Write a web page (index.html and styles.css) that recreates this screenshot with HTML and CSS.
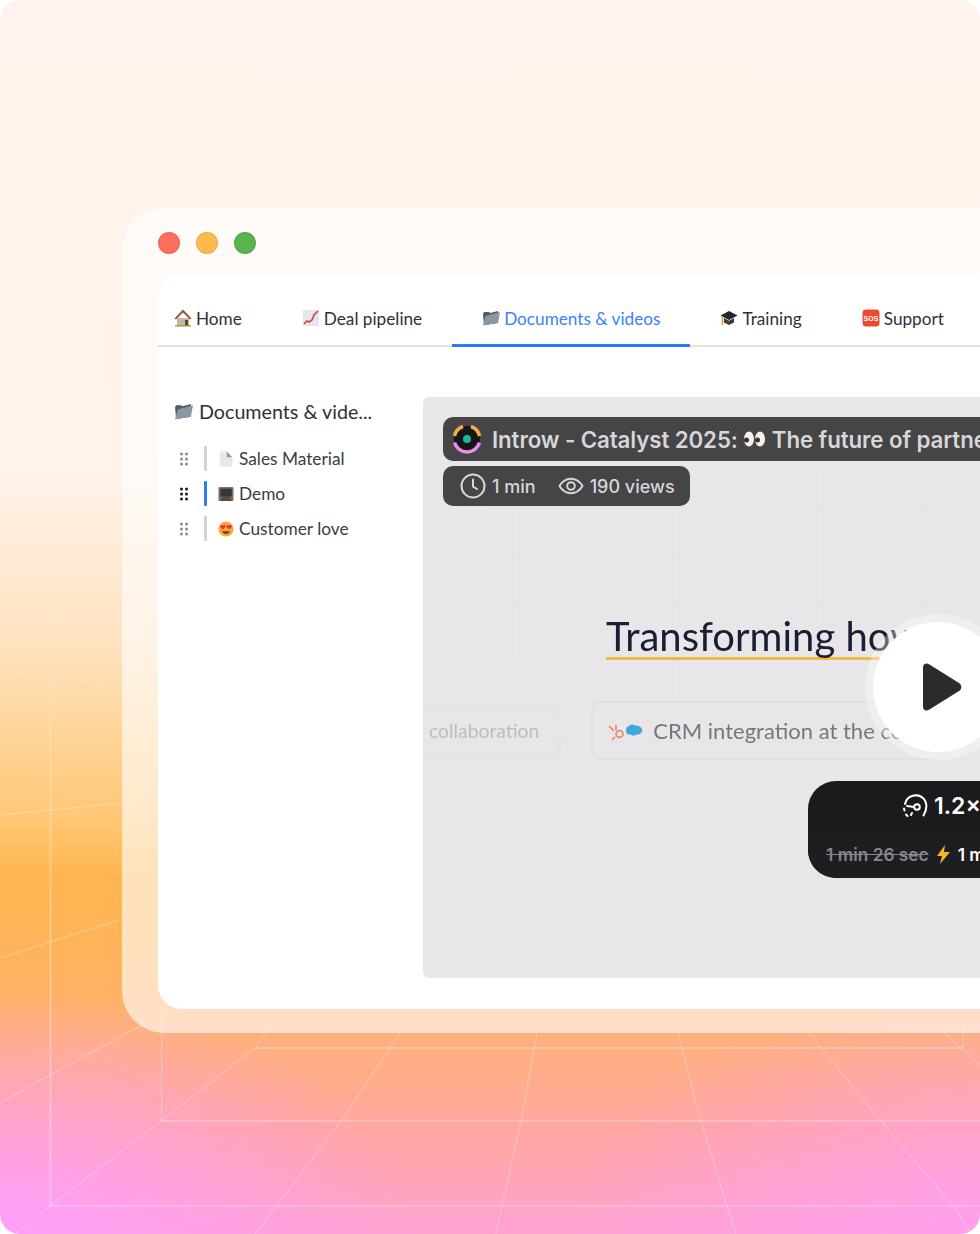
FILE: index.html
```html
<!DOCTYPE html>
<html lang="en">
<head>
    <meta charset="UTF-8">
    <meta name="viewport" content="width=device-width, initial-scale=1.0">
    <title>Partner portal</title>
    <link rel="stylesheet" href="styles.css">
</head>
<body>
    <div class="page">
        <!-- floor grid behind the window -->
        <svg class="floor-grid" width="980" height="1234" viewBox="0 0 980 1234" fill="none">
            <defs>
                <linearGradient id="fade" gradientUnits="userSpaceOnUse" x1="0" y1="510" x2="0" y2="900">
                    <stop offset="0" stop-color="#fff" stop-opacity="0"/>
                    <stop offset="1" stop-color="#fff" stop-opacity=".3"/>
                </linearGradient>
            </defs>
            <path d="M50.500 510V1206" stroke="url(#fade)" stroke-width="2"/>
            <g stroke="#fff" stroke-opacity=".3">
                <path d="M161.500 1010V1121M963.500 1020V1048"/>
                <path d="M50 1206H980M161 1121H980M255 1048H963" stroke-width="1.500"/>
                <path d="M15 1234L50 1206 161 1121 255 1048 272 1025"/>
                <path d="M255 1234L277 1206 341 1121 400 1033"/>
                <path d="M496 1234L502 1206 521 1121 537 1033"/>
                <path d="M736 1234L727 1206 701 1121 678 1033"/>
                <path d="M972 1234L953 1206 881 1121 809 1033"/>
                <path d="M945 1033L980 1066"/>
                <path d="M0 1103L50 1075 142 1025"/>
                <path d="M0 958L50 942 122 919"/>
                <path d="M0 815L122 803"/>
                <path d="M10 672L122 685" stroke-opacity=".2"/>
            </g>
        </svg>

        <div class="window">
            <div class="window-bar">
                <span class="dot dot-red"></span>
                <span class="dot dot-yellow"></span>
                <span class="dot dot-green"></span>
            </div>
            <div class="card">
                <nav class="tabs">
                    <a class="tab tab-first">
                        <svg class="emoji" viewBox="0 0 18 18"><path d="M3 9h12v8H3z" fill="#d9b48c"/><path d="M9 0.500L0.500 9.500l1.500 1L9 3.500l7 7 1.500-1z" fill="#8b5a3c"/><rect x="4.500" y="10" width="4.500" height="3.500" fill="#8fc3dc"/><rect x="11" y="11" width="3" height="6" fill="#6b4428"/><path d="M1 16.200h16v1.300H1z" fill="#7d9a4f"/></svg>
                        Home
                    </a>
                    <a class="tab">
                        <svg class="emoji" viewBox="0 0 18 18"><rect x="1" y="1" width="16" height="16" fill="#e6e7ec"/><path d="M2 15l3-3 2 1 3-2 2-5 4-4" stroke="#d8453c" stroke-width="1.700" fill="none"/></svg>
                        Deal pipeline
                    </a>
                    <a class="tab tab-active">
                        <svg class="emoji" viewBox="0 0 18 18"><path d="M1 5l1-2h5l1 1 8-2v12L2 16z" fill="#4f5c68"/><path d="M3.500 7L18 3l-2 11L1 16.500z" fill="#8b97a3"/></svg>
                        Documents &amp; videos
                    </a>
                    <a class="tab">
                        <svg class="emoji" viewBox="0 0 18 18"><path d="M9 2L0.500 6.500 9 11l8.500-4.500z" fill="#26262a"/><path d="M4 9v4.500l5 2.500 5-2.500V9l-5 2.700z" fill="#3d3b3c"/><path d="M2.500 8v8" stroke="#e2a32e" stroke-width="1.700"/></svg>
                        Training
                    </a>
                    <a class="tab">
                        <svg class="emoji" viewBox="0 0 18 18"><rect x="0.500" y="0.500" width="17" height="17" rx="3.500" fill="#ee4a32"/><text x="9" y="11.500" class="sos">SOS</text></svg>
                        Support
                    </a>
                </nav>
                <div class="content">
                    <aside class="sidebar">
                        <div class="side-title">
                            <svg class="emoji emoji-big" viewBox="0 0 18 18"><path d="M1 5l1-2h5l1 1 8-2v12L2 16z" fill="#4f5c68"/><path d="M3.500 7L18 3l-2 11L1 16.500z" fill="#8b97a3"/></svg>
                            Documents &amp; vide...
                        </div>
                        <div class="side-item">
                            <svg class="grip" viewBox="0 0 8 14"><g fill="#8a8a90"><circle cx="1.500" cy="2" r="1.500"/><circle cx="6.500" cy="2" r="1.500"/><circle cx="1.500" cy="7" r="1.500"/><circle cx="6.500" cy="7" r="1.500"/><circle cx="1.500" cy="12" r="1.500"/><circle cx="6.500" cy="12" r="1.500"/></g></svg>
                            <span class="side-bar"></span>
                            <svg class="emoji emoji-side" viewBox="0 0 16 18"><path d="M1 0.500h8l6 6.500v10.500H1z" fill="#e9e9ec"/><path d="M9 0.500l6 6.500H9z" fill="#96969c"/></svg>
                            Sales Material
                        </div>
                        <div class="side-item">
                            <svg class="grip" viewBox="0 0 8 14"><g fill="#19191c"><circle cx="1.500" cy="2" r="1.500"/><circle cx="6.500" cy="2" r="1.500"/><circle cx="1.500" cy="7" r="1.500"/><circle cx="6.500" cy="7" r="1.500"/><circle cx="1.500" cy="12" r="1.500"/><circle cx="6.500" cy="12" r="1.500"/></g></svg>
                            <span class="side-bar side-bar-active"></span>
                            <svg class="emoji emoji-side" viewBox="0 0 18 18"><rect x="0.500" y="1" width="17" height="16" rx="1.500" fill="#8a6f5f"/><rect x="2.500" y="3" width="13" height="9" fill="#33363d"/><path d="M2 17l3-5h8l3 5z" fill="#5d4a40"/></svg>
                            Demo
                        </div>
                        <div class="side-item">
                            <svg class="grip" viewBox="0 0 8 14"><g fill="#8a8a90"><circle cx="1.500" cy="2" r="1.500"/><circle cx="6.500" cy="2" r="1.500"/><circle cx="1.500" cy="7" r="1.500"/><circle cx="6.500" cy="7" r="1.500"/><circle cx="1.500" cy="12" r="1.500"/><circle cx="6.500" cy="12" r="1.500"/></g></svg>
                            <span class="side-bar"></span>
                            <svg class="emoji emoji-side" viewBox="0 0 18 18"><circle cx="9" cy="9" r="8.500" fill="#f6a93b"/><path d="M4.500 11.500c2 4 7 4 9 0z" fill="#7a3b1e"/><path d="M5.500 9.500L2.500 6.500c0-2.500 2.500-2.500 3-1 .5-1.500 3-1.500 3 1zM12.500 9.500L9.500 6.500c0-2.500 2.500-2.500 3-1 .5-1.500 3-1.500 3 1z" fill="#e5303c"/></svg>
                            Customer love
                        </div>
                    </aside>

                    <section class="video">
                        <svg class="video-grid" width="560" height="581" viewBox="0 0 560 581" fill="none" stroke="#e5e3e6">
                            <path d="M60 110H560M0 210H560M0 345H560M0 415H560M90 90V260M250 90V300M400 70V260M500 80V520M205 430V520M300 430V520M0 160H300"/>
                        </svg>
                        <div class="chip chip-title">
                            <svg class="logo" width="30" height="30" viewBox="0 0 30 30" fill="none">
                                <circle cx="15" cy="15" r="13" fill="#161618"/>
                                <path d="M2.500 12A13 13 0 0 1 11 2.500" stroke="#f5ae3c" stroke-width="3.500"/>
                                <path d="M19 2.500A13 13 0 0 1 27.500 12" stroke="#f5ae3c" stroke-width="3.500"/>
                                <path d="M2.500 18.500A13 13 0 0 0 27.500 18.500" stroke="#f08ae8" stroke-width="3.500"/>
                                <circle cx="15" cy="15" r="4" fill="#1fb58f"/>
                            </svg>
                            <span>Introw - Catalyst 2025:</span>
                            <svg class="eyes" width="23" height="18" viewBox="0 0 23 18"><ellipse cx="6" cy="9" rx="5" ry="7.500" fill="#f4f2ee"/><ellipse cx="17" cy="9" rx="5" ry="7.500" fill="#f4f2ee"/><circle cx="3.500" cy="10" r="2.500" fill="#4a2a16"/><circle cx="14.500" cy="10" r="2.500" fill="#4a2a16"/></svg>
                            <span>The future of partnerships</span>
                        </div>
                        <div class="chip chip-meta">
                            <svg width="26" height="26" viewBox="0 0 26 26" fill="none" stroke="#d8d6d8" stroke-width="2" stroke-linecap="round"><circle cx="13" cy="13" r="11.500"/><path d="M13 6.500V13.500l4 2.500"/></svg>
                            <span>1 min</span>
                            <svg class="meta-eye" width="26" height="26" viewBox="0 0 26 26" fill="none" stroke="#d8d6d8" stroke-width="2"><path d="M1.500 13C4.500 8 8.500 5.800 13 5.800S21.500 8 24.500 13C21.500 18 17.500 20.200 13 20.200S4.500 18 1.500 13z"/><circle cx="13" cy="13" r="3.800"/></svg>
                            <span>190 views</span>
                        </div>

                        <div class="slide">
                            <h2 class="slide-title">Transforming how</h2>
                            <div class="pills">
                                <div class="pill pill-faded">collaboration</div>
                                <div class="pill">
                                    <svg width="36" height="20" viewBox="0 0 36 20" fill="none"><path d="M9 13a3.500 3.500 0 1 0 0-.1M9 9V4M7 10L2 5M8 16l-3 3" stroke="#ef7d5e" stroke-width="1.500"/><path d="M22 5c2-2 4-2 6-.5 3-.5 6 1 7 3.500 1 3-2 6-5 5.500-2 1.500-5 1.500-6.500 0-3 .5-5-2-4.500-4.500 0-2 1-3.500 3-4z" fill="#3fa7dc"/></svg>
                                    <span>CRM integration at the core</span>
                                </div>
                            </div>
                        </div>

                        <div class="play">
                            <svg width="42" height="50" viewBox="0 0 42 50"><path d="M2 5.500C2 2 5 .5 8 2.200L38 21c3 2 3 6 0 8L8 47.800C5 49.500 2 48 2 44.500z" fill="#2b2b2d"/></svg>
                        </div>

                        <div class="speed">
                            <div class="speed-top">
                                <svg width="26" height="24" viewBox="0 0 26 24" fill="none" stroke="#fff" stroke-width="2" stroke-linecap="round"><path d="M3 10A11 11 0 0 1 23 6.500c2.500 5 1.500 10-1.500 15"/><path d="M2 14.500l.5 2M4 20.500l1.500 1.500M9 21l1-2"/><circle cx="15" cy="13" r="2.800"/><path d="M12 13L5 12"/></svg>
                                <span>1.2×</span>
                            </div>
                            <div class="speed-bottom">
                                <span class="speed-old">1 min 26 sec</span>
                                <svg width="13" height="19" viewBox="0 0 13 19"><path d="M8 0L0 11h5l-2 8 10-12H7z" fill="#f5b32f"/></svg>
                                <span class="speed-new">1 min</span>
                            </div>
                        </div>
                    </section>
                </div>
            </div>
        </div>
    </div>
</body>
</html>
```

FILE: styles.css
```css
body {
    margin: 0;
    background-color: #fff;
}
.page {
    position: relative;
    box-sizing: border-box;
    width: 980px;
    height: 1234px;
    padding: 208px 0 0 122px;
    overflow: hidden;
    border-radius: 20px;
    background:
        radial-gradient(420px 240px at 0 1234px, rgba(255, 158, 255, 0.9), rgba(255, 158, 255, 0)),
        radial-gradient(420px 240px at 980px 1234px, rgba(255, 158, 245, 0.8), rgba(255, 158, 245, 0)),
        linear-gradient(180deg, #fff4ed 0, #fff3ea 38%, #ffe2c0 52%, #ffc877 66%, #ffb650 71%, #ffb262 80%, #ffaf80 85%, #ffa6a8 93%, #ffa2d2 100%);
}
.floor-grid {
    position: absolute;
    top: 0;
    left: 0;
}
.window {
    position: relative;
    display: flex;
    flex-direction: column;
    box-sizing: border-box;
    width: 1100px;
    height: 825px;
    padding: 0 0 24px 36px;
    border-radius: 42px;
    background-color: rgba(255, 255, 255, 0.6);
}
.window-bar {
    display: flex;
    gap: 16px;
    align-items: center;
    height: 70px;
    margin-bottom: -4px;
}
.dot {
    box-sizing: border-box;
    width: 22px;
    height: 22px;
    border-radius: 50%;
    border: 1px solid rgba(0, 0, 0, 0.08);
}
.dot-red { background-color: #ff6f5c; }
.dot-yellow { background-color: #ffb94d; }
.dot-green { background-color: #5ab34f; }

.card {
    flex: 1;
    display: flex;
    flex-direction: column;
    border-radius: 24px;
    background-color: #fff;
    font-family: "Lato", sans-serif;
    color: #303036;
}
.tabs {
    display: flex;
    height: 73px;
    box-sizing: border-box;
    border-bottom: 2px solid #e4e3e8;
}
.tab {
    display: flex;
    align-items: center;
    gap: 4px;
    height: 73px;
    box-sizing: border-box;
    padding: 15px 30px 0;
    font-size: 17.200px;
    white-space: nowrap;
}
.tab-first {
    padding-left: 16px;
}
.tab-active {
    padding-top: 18px;
    color: #3b82f6;
    border-bottom: 3px solid #2b7cf6;
}
.emoji {
    width: 18px;
    height: 18px;
    flex-shrink: 0;
}
.sos {
    font-family: "Liberation Sans", sans-serif;
    font-size: 7px;
    font-weight: 700;
    fill: #fff;
    text-anchor: middle;
}
.content {
    flex: 1;
    display: flex;
    padding: 50px 0 31px;
}
.sidebar {
    flex: 0 0 265px;
    box-sizing: border-box;
    padding-left: 16px;
}
.side-title {
    display: flex;
    align-items: center;
    gap: 6px;
    height: 28px;
    margin-bottom: 16px;
    font-size: 19.700px;
    white-space: nowrap;
}
.emoji-big {
    width: 19px;
    height: 19px;
}
.side-item {
    display: flex;
    align-items: center;
    height: 35px;
    padding-left: 6px;
    font-size: 17.300px;
    color: #3c3c42;
}
.grip {
    width: 8px;
    height: 14px;
    margin-right: 16px;
}
.side-bar {
    width: 3px;
    height: 25px;
    margin-right: 11px;
    border-radius: 1px;
    background-color: #d3d3d6;
}
.side-bar-active {
    background-color: #2b7cf6;
}
.emoji-side {
    width: 16px;
    height: 16px;
    margin-right: 5px;
}

.video {
    position: relative;
    flex: 1;
    display: flex;
    flex-direction: column;
    align-items: flex-start;
    gap: 5px;
    box-sizing: border-box;
    padding: 20px 0 0 20px;
    overflow: hidden;
    border-radius: 6px 0 0 6px;
    background-color: #e8e6e9;
    font-family: "Inter", sans-serif;
}
.video-grid {
    position: absolute;
    top: 0;
    left: 0;
}
.chip {
    position: relative;
    display: flex;
    align-items: center;
    border-radius: 10px;
    background-color: #454446;
    color: #d8d6d8;
    white-space: nowrap;
}
.chip-title {
    gap: 9px;
    height: 44px;
    padding: 0 20px 0 9px;
    font-size: 22.300px;
    font-weight: 600;
    letter-spacing: -0.1px;
}
.logo {
    margin-right: 1px;
}
.eyes {
    margin: 0 -3px 0 -4px;
}
.chip-meta {
    gap: 6px;
    height: 40px;
    padding: 0 15px 0 17px;
    font-size: 18px;
    font-weight: 500;
}
.meta-eye {
    margin-left: 16px;
}
.slide {
    position: relative;
    margin-top: 100px;
    margin-left: -20px;
}
.slide-title {
    display: inline-block;
    box-sizing: border-box;
    height: 49px;
    margin: 0 0 0 183px;
    line-height: 50px;
    border-bottom: 3px solid #f3b547;
    font-family: "Lato", sans-serif;
    font-size: 40px;
    font-weight: 400;
    color: #1a1d33;
    white-space: nowrap;
    filter: blur(0.4px);
}
.pills {
    display: flex;
    align-items: center;
    gap: 30px;
    margin-top: 41px;
    margin-left: -69px;
}
.pill {
    display: flex;
    align-items: center;
    gap: 10px;
    height: 59px;
    box-sizing: border-box;
    padding: 0 22px 0 14px;
    border: 2px solid #e0dfe2;
    border-radius: 10px;
    font-family: "Lato", sans-serif;
    font-size: 22px;
    color: #77767c;
    white-space: nowrap;
    filter: blur(0.4px);
}
.pill-faded {
    height: 51px;
    padding: 0 20px 0 73px;
    color: #bdbcc0;
    border-color: #e3e2e5;
    font-size: 19.300px;
}

/* these sit on top of the video frame */
.play {
    position: absolute;
    top: 225px;
    left: 450px;
    display: flex;
    align-items: center;
    justify-content: center;
    box-sizing: border-box;
    width: 130px;
    height: 130px;
    padding-left: 8px;
    border-radius: 50%;
    background-color: #fff;
    box-shadow: 0 0 0 8px rgba(255, 255, 255, 0.35);
}
.speed {
    position: absolute;
    top: 384px;
    left: 385px;
    width: 270px;
    height: 97px;
    overflow: hidden;
    border-radius: 28px;
    background-color: #1b1b1e;
    color: #fff;
    white-space: nowrap;
}
.speed-top {
    display: flex;
    align-items: center;
    gap: 6px;
    height: 50px;
    padding-left: 94px;
    font-size: 23px;
    font-weight: 600;
}
.speed-bottom {
    display: flex;
    align-items: center;
    gap: 8px;
    height: 47px;
    padding-left: 18px;
    font-size: 17.300px;
    font-weight: 600;
    background-color: #1e1e21;
}
.speed-old {
    color: #85858a;
    text-decoration: line-through;
}
```
